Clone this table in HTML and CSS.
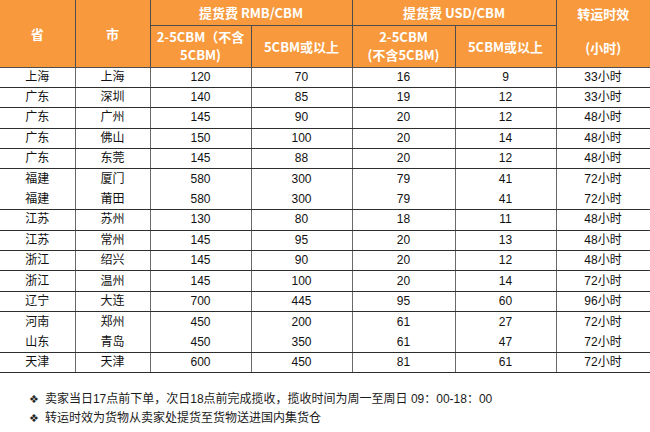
FILE: index.html
```html
<!DOCTYPE html>
<html lang="zh">
<head>
<meta charset="utf-8">
<title>提货费</title>
<link rel="stylesheet" href="styles.css">
</head>
<body>
<table class="rates">
  <colgroup>
    <col class="c-prov"><col class="c-city"><col class="c-a"><col class="c-b"><col class="c-c"><col class="c-d"><col class="c-t">
  </colgroup>
  <thead>
    <tr class="h1">
      <th rowspan="2" class="first">省</th>
      <th rowspan="2">市</th>
      <th colspan="2" class="nosep grp">提货费 RMB/CBM</th>
      <th colspan="2" class="grp">提货费 USD/CBM</th>
      <th rowspan="2" class="time"><span class="time-inner">转运时效<br><br>(小时)</span></th>
    </tr>
    <tr class="h2">
      <th class="two">2-5CBM（不含<br>5CBM)</th>
      <th class="nosep">5CBM或以上</th>
      <th class="two">2-5CBM<br>(不含5CBM)</th>
      <th>5CBM或以上</th>
    </tr>
  </thead>
  <tbody>
    <tr><td class="first">上海</td><td>上海</td><td>120</td><td class="nosep">70</td><td>16</td><td>9</td><td>33小时</td></tr>
    <tr><td class="first">广东</td><td>深圳</td><td>140</td><td class="nosep">85</td><td>19</td><td>12</td><td>33小时</td></tr>
    <tr><td class="first">广东</td><td>广州</td><td>145</td><td class="nosep">90</td><td>20</td><td>12</td><td>48小时</td></tr>
    <tr><td class="first">广东</td><td>佛山</td><td>150</td><td class="nosep">100</td><td>20</td><td>14</td><td>48小时</td></tr>
    <tr><td class="first">广东</td><td>东莞</td><td>145</td><td class="nosep">88</td><td>20</td><td>12</td><td>48小时</td></tr>
    <tr class="joined"><td class="first">福建</td><td>厦门</td><td>580</td><td class="nosep">300</td><td>79</td><td>41</td><td>72小时</td></tr>
    <tr><td class="first">福建</td><td>莆田</td><td>580</td><td class="nosep">300</td><td>79</td><td>41</td><td>72小时</td></tr>
    <tr><td class="first">江苏</td><td>苏州</td><td>130</td><td class="nosep">80</td><td>18</td><td>11</td><td>48小时</td></tr>
    <tr><td class="first">江苏</td><td>常州</td><td>145</td><td class="nosep">95</td><td>20</td><td>13</td><td>48小时</td></tr>
    <tr><td class="first">浙江</td><td>绍兴</td><td>145</td><td class="nosep">90</td><td>20</td><td>12</td><td>48小时</td></tr>
    <tr><td class="first">浙江</td><td>温州</td><td>145</td><td class="nosep">100</td><td>20</td><td>14</td><td>72小时</td></tr>
    <tr><td class="first">辽宁</td><td>大连</td><td>700</td><td class="nosep">445</td><td>95</td><td>60</td><td>96小时</td></tr>
    <tr class="joined"><td class="first">河南</td><td>郑州</td><td>450</td><td class="nosep">200</td><td>61</td><td>27</td><td>72小时</td></tr>
    <tr><td class="first">山东</td><td>青岛</td><td>450</td><td class="nosep">350</td><td>61</td><td>47</td><td>72小时</td></tr>
    <tr><td class="first">天津</td><td>天津</td><td>600</td><td class="nosep">450</td><td>81</td><td>61</td><td>72小时</td></tr>
  </tbody>
</table>
<div class="notes">
  <p class="note"><span class="bullet">❖</span>卖家当日17点前下单，次日18点前完成揽收，揽收时间为周一至周日 09：00-18：00</p>
  <p class="note"><span class="bullet">❖</span>转运时效为货物从卖家处提货至货物送进国内集货仓</p>
</div>
</body>
</html>
```

FILE: styles.css
```css
html, body {
  margin: 0;
  padding: 0;
  background: #ffffff;
}

body {
  font-family: "Liberation Sans", "Noto Sans CJK SC", sans-serif;
  font-size: 12px;
  color: #111111;
}

.rates {
  border-collapse: collapse;
  table-layout: fixed;
  width: 650px;
}

.c-prov { width: 75px; }
.c-city { width: 75px; }
.c-a { width: 101px; }
.c-b { width: 101px; }
.c-c { width: 103px; }
.c-d { width: 101px; }
.c-t { width: 94px; }

.rates th {
  background: #f7993c;
  color: #ffffff;
  font-family: "Noto Sans CJK SC", sans-serif;
  font-weight: bold;
  font-size: 13px;
  padding: 0;
  text-align: center;
  vertical-align: middle;
  border: 1px solid #4d4d4d;
  border-top: none;
}

.rates .h1 { height: 25px; }
.rates .h2 { height: 42px; }

.rates th.two {
  line-height: 18px;
}

.rates th.time {
  vertical-align: top;
  border-right: none;
}

.time-inner {
  display: block;
  line-height: 17px;
  padding-top: 5px;
}

.rates .first {
  border-left: none;
}

.rates .nosep {
  border-right: none;
}

.rates tbody tr {
  height: 20.4px;
}

.rates td {
  height: 18px;
  padding: 0;
  text-align: center;
  vertical-align: middle;
  line-height: 13px;
  border-left: 1px solid #6a6a6a;
  border-right: 1px solid #6a6a6a;
  border-bottom: 1px solid #2e2e2e;
}

.rates tbody td:last-child {
  border-right: 1px solid #6a6a6a;
}

.rates tr.joined td {
  border-bottom: none;
}

.notes {
  padding: 17px 0 0 29px;
}

.note {
  margin: 0;
  line-height: 19px;
  font-size: 12px;
  color: #1a1a1a;
}

.bullet {
  font-family: "DejaVu Sans", sans-serif;
  font-size: 11px;
  margin-right: 6px;
  color: #222222;
}
```
